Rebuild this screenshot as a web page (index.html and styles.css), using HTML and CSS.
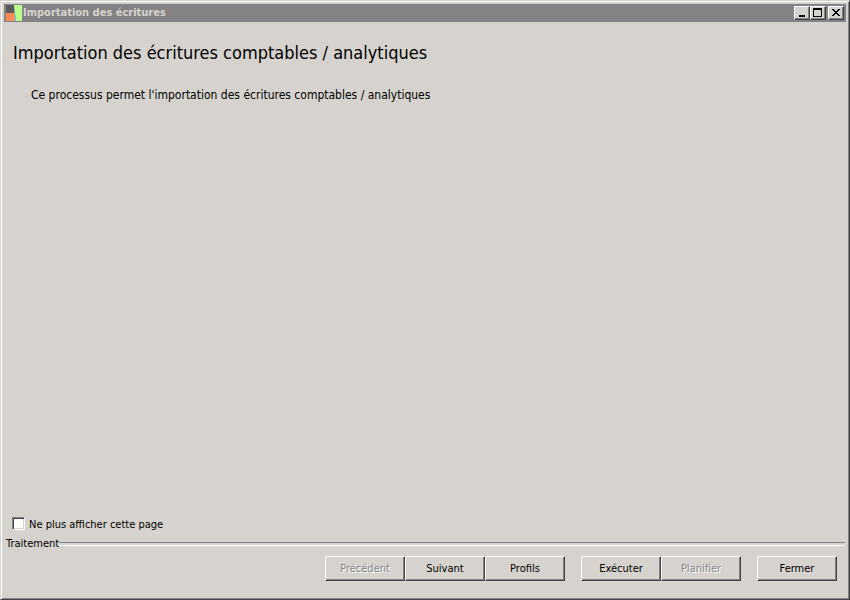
FILE: index.html
```html
<!DOCTYPE html>
<html lang="fr">
<head>
  <meta charset="UTF-8" />
  <meta name="viewport" content="width=device-width, initial-scale=1.0" />
  <title>Importation des écritures</title>
  <link rel="stylesheet" href="styles.css">
</head>
<body>
  <div class="window">
    <header class="title-bar">
      <svg class="app-icon" viewBox="0 0 18 18" aria-hidden="true">
        <rect x="1" y="1" width="8" height="8" fill="#5c5a5c" />
        <rect x="1" y="9" width="8" height="8" fill="#ff8a55" />
        <path d="M9 1h8v16h-6z" fill="#b9ff8c" />
        <path d="M9 6l2 11H9z" fill="#9cb4c4" />
      </svg>
      <span class="title-text">Importation des écritures</span>
      <div class="title-buttons">
        <button type="button" class="title-button" aria-label="Réduire">
          <svg viewBox="0 0 12 10" shape-rendering="crispEdges"><path d="M3 7h6v2H3z" /></svg>
        </button>
        <button type="button" class="title-button" aria-label="Agrandir">
          <svg viewBox="0 0 12 10" shape-rendering="crispEdges"><path fill-rule="evenodd" d="M1 0h9v9H1zM2 2v6h7V2z" /></svg>
        </button>
        <button type="button" class="title-button close" aria-label="Fermer la fenêtre">
          <svg viewBox="0 0 12 10" shape-rendering="crispEdges"><path d="M2 1h2v1h1v1h2V2h1V1h2v1H9v1H8v1H7v1h1v1h1v1h1v1H8V7H7V6H5v1H4v1H2V7h1V6h1V5h1V4H4V3H3V2H2z" /></svg>
        </button>
      </div>
    </header>

    <main>
      <h1>Importation des écritures comptables / analytiques</h1>
      <p>Ce processus permet l'importation des écritures comptables / analytiques</p>
    </main>

    <div class="skip-page">
      <input type="checkbox" id="skip">
      <label for="skip">Ne plus afficher cette page</label>
    </div>

    <fieldset class="actions">
      <legend>Traitement</legend>
      <div class="button-row">
        <div class="button-group">
          <button type="button" disabled>Précédent</button>
          <button type="button">Suivant</button>
          <button type="button">Profils</button>
        </div>
        <div class="button-group">
          <button type="button">Exécuter</button>
          <button type="button" disabled>Planifier</button>
        </div>
        <button type="button">Fermer</button>
      </div>
    </fieldset>
  </div>
</body>
</html>
```
FILE: styles.css
```css
* { box-sizing: border-box; }

body {
  margin: 0;
  background-color: #d6d3ce;
  color: #000;
  font-family: "DejaVu Sans Condensed", "Liberation Sans", sans-serif;
  font-size: 11px;
  line-height: 14px;
}

/* Cadre de la fenêtre */
.window {
  display: flex;
  flex-direction: column;
  min-height: 100vh;
  padding: 3px;
  border: 1px solid #d6d3ce;
  border-right-color: #424142;
  border-bottom-color: #424142;
  box-shadow: inset 1px 1px #fff, inset -1px -1px #848284;
}

/* Barre de titre */
.title-bar {
  display: flex;
  align-items: center;
  height: 18px;
  padding: 0 2px 0 1px;
  background-color: #848284;
  color: #d6d3ce;
}

.app-icon { width: 18px; height: 18px; }

.title-text {
  flex: 1;
  font-weight: bold;
}

.title-buttons { display: flex; }

button {
  width: 80px;
  height: 25px;
  padding: 0;
  border: 1px solid #fff;
  border-right-color: #424142;
  border-bottom-color: #424142;
  background-color: #d6d3ce;
  box-shadow: inset -1px -1px #848284;
  color: #000;
  font: inherit;
}

button:active:not(:disabled) {
  border-color: #424142 #fff #fff #424142;
  box-shadow: inset 1px 1px #848284;
}

button:disabled {
  color: #848284;
  text-shadow: 1px 1px #fff;
}

.title-button {
  display: flex;
  width: 16px;
  height: 14px;
}

.title-button svg {
  width: 12px;
  height: 10px;
  margin: 1px;
}

.title-button.close { margin-left: 2px; }

/* Contenu */
main {
  flex: 1;
  padding: 20px 9px;
}

h1 {
  margin: 0 0 23px;
  font-size: 18px;
  font-weight: normal;
  line-height: 22px;
}

p {
  margin: 0 18px;
  font-size: 12px;
  line-height: 16px;
}

.skip-page {
  display: flex;
  align-items: flex-end;
  gap: 4px;
  padding: 0 8px;
  margin-bottom: 5px;
}

input[type="checkbox"] {
  appearance: none;
  width: 13px;
  height: 13px;
  margin: 0 0 2px;
  border: 1px solid #848284;
  border-right-color: #fff;
  border-bottom-color: #fff;
  background-color: #fff;
  box-shadow: inset 1px 1px #424142, inset -1px -1px #d6d3ce;
}

input[type="checkbox"]:checked::before {
  content: "✓";
  display: block;
  font-size: 10px;
  font-weight: bold;
  line-height: 11px;
  text-align: center;
}

/* Boutons du traitement */
.actions {
  min-width: 0;
  margin: 0;
  padding: 5px 9px 15px;
  border: 0;
}

.actions legend {
  display: flex;
  align-items: center;
  width: calc(100% + 15px);
  margin: 0 0 0 -7px;
  padding: 0;
}

.actions legend::after {
  content: "";
  flex: 1;
  height: 2px;
  border-top: 1px solid #848284;
  border-bottom: 1px solid #fff;
}

.button-row {
  display: flex;
  flex-wrap: wrap;
  justify-content: flex-end;
  gap: 16px;
}

.button-group { display: flex; }
```
